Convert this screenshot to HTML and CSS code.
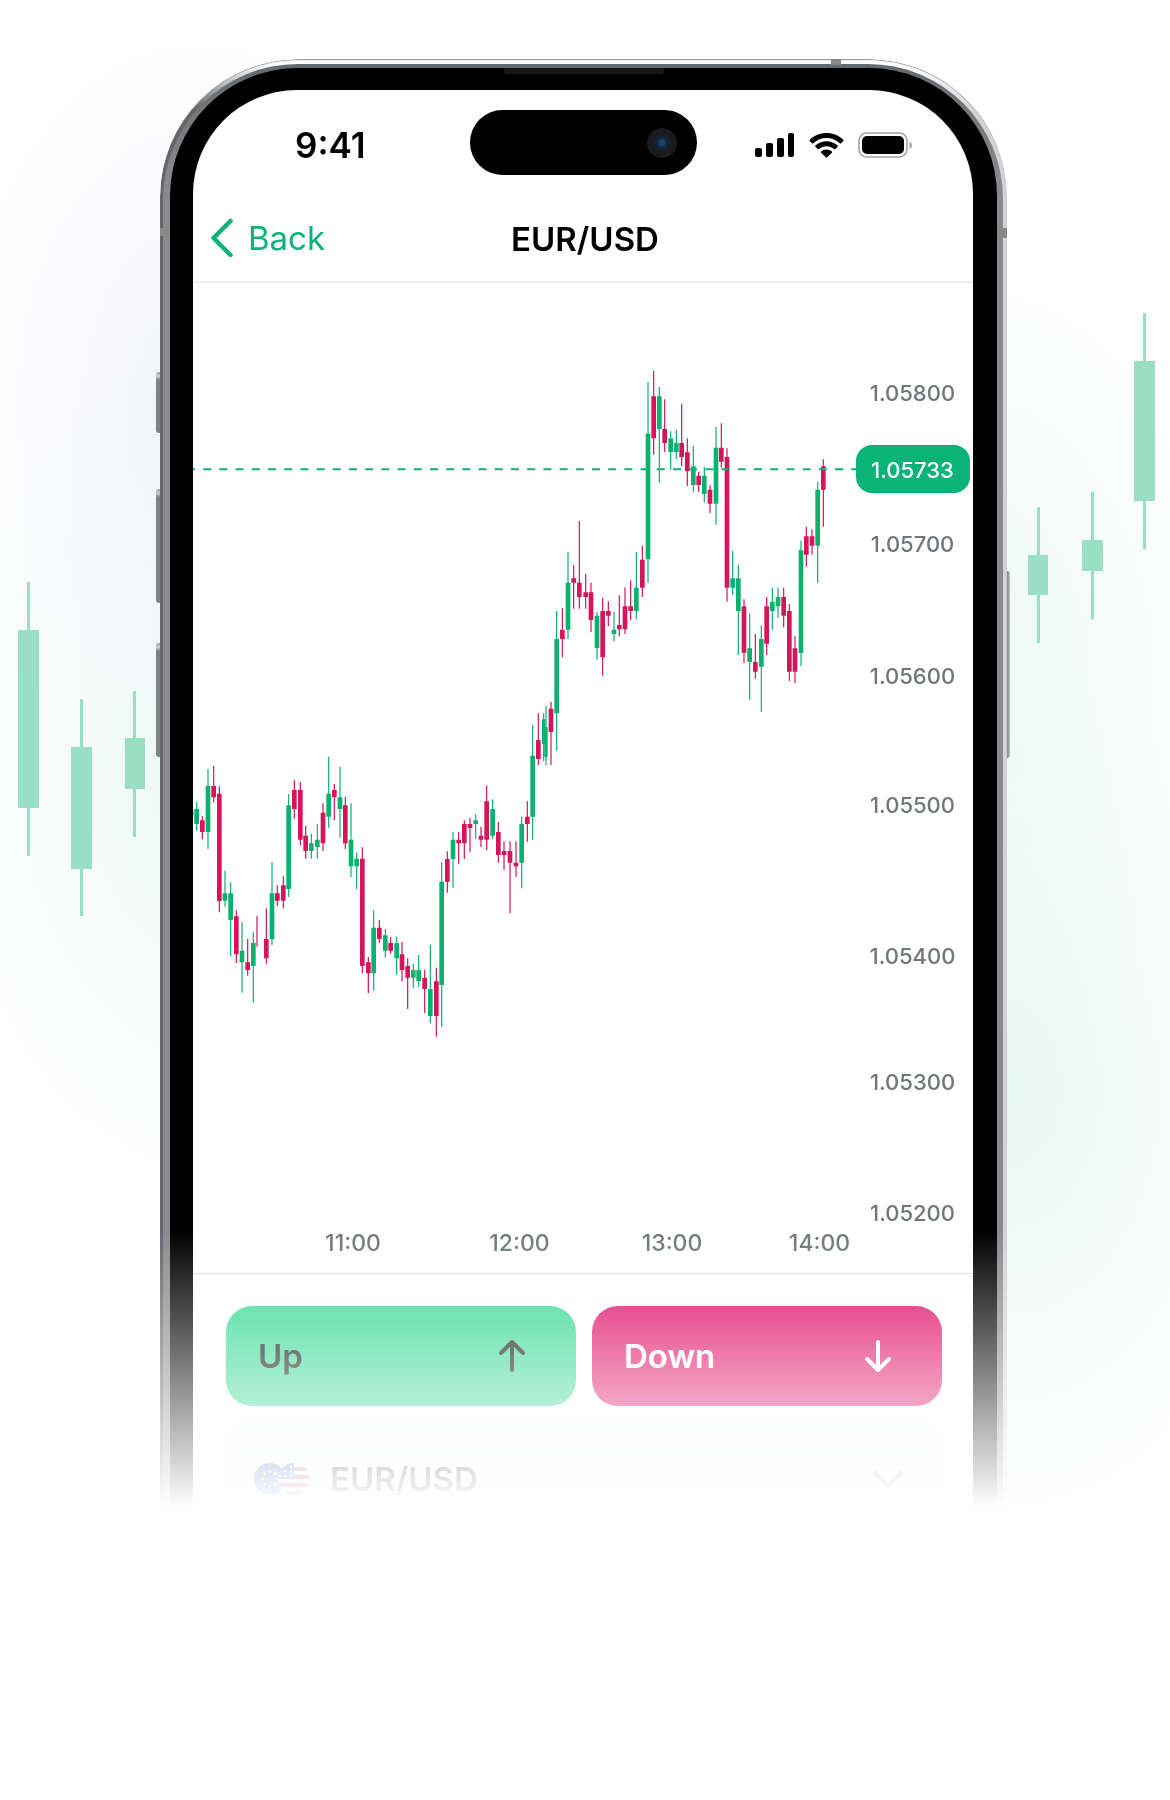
FILE: index.html
```html
<!DOCTYPE html>
<html lang="en">
<head>
<meta charset="utf-8">
<meta name="viewport" content="width=device-width, initial-scale=1">
<title>EUR/USD</title>
<link rel="stylesheet" href="styles.css">
</head>
<body>
<main class="hero">
  <svg class="side-candles" viewBox="0 0 160 1451" aria-hidden="true">
    <path d="M27 523h3v274h-3zM18 571h21v178H18zM80 640h3v217h-3zM71 688h21v122H71zM133 632h3v146h-3zM125 679h20v51h-20z"/>
  </svg>

  <div class="device">
    <span class="key key-mute"></span>
    <span class="key key-up"></span>
    <span class="key key-down"></span>
    <span class="key key-power"></span>
    <div class="frame">
      <span class="antenna antenna-left"></span>
      <span class="antenna antenna-right"></span>
      <span class="antenna antenna-top"></span>
      <div class="rim">
        <div class="bezel">
          <span class="speaker"></span>
          <div class="screen">
            <div class="status">
              <span class="time">9:41</span>
              <div class="island"><span class="camera"></span></div>
              <div class="indicators">
                <svg width="40" height="26" viewBox="0 0 40 26" aria-hidden="true">
                  <rect x="0" y="16" width="7" height="9" rx="2"/><rect x="11" y="11" width="7" height="14" rx="2"/><rect x="22" y="6" width="7" height="19" rx="2"/><rect x="33" y="1" width="6" height="24" rx="2"/>
                </svg>
                <svg width="35" height="26" viewBox="0 0 35 26" aria-hidden="true">
                  <path d="M17.5 1C24 1 30 3.500 34.300 7.700a.9.900 0 0 1 0 1.300l-2.300 2.300a.9.900 0 0 1-1.300 0C27 7.900 22.500 6 17.500 6S8 7.900 4.300 11.300a.9.900 0 0 1-1.300 0L.7 9a.9.900 0 0 1 0-1.300C5 3.500 11 1 17.500 1z"/>
                  <path d="M17.500 9.200c4.300 0 8.200 1.600 11.100 4.300a.9.900 0 0 1 0 1.300l-2.300 2.300a.9.900 0 0 1-1.200 0c-2.100-1.900-4.700-2.900-7.600-2.900s-5.500 1-7.600 2.900a.9.900 0 0 1-1.200 0l-2.300-2.300a.9.900 0 0 1 0-1.300c2.900-2.700 6.800-4.300 11.100-4.300z"/>
                  <path d="M17.500 17.400c2.100 0 4 .8 5.400 2a.9.900 0 0 1 0 1.300l-4.700 4.600a1 1 0 0 1-1.400 0l-4.700-4.600a.9.900 0 0 1 0-1.300c1.400-1.200 3.300-2 5.400-2z"/>
                </svg>
                <svg width="55" height="26" viewBox="0 0 55 26" aria-hidden="true">
                  <rect x="1" y="1" width="48" height="24" rx="7.500" fill="none" stroke="#a3a3a3" stroke-width="1.600"/>
                  <rect x="4" y="4" width="42" height="18" rx="5"/>
                  <path d="M51.500 9.500c3.300 1.500 3.300 6 0 7.500z" fill="#a3a3a3"/>
                </svg>
              </div>
            </div>

            <header class="nav">
              <a class="back" href="#">
                <svg width="24" height="40" viewBox="0 0 24 40" fill="none" stroke="currentColor" stroke-width="4.500" stroke-linecap="round" stroke-linejoin="round" aria-hidden="true"><path d="M20.500 3 3.500 20l17 17"/></svg>
                Back
              </a>
              <h1 class="title">EUR/USD</h1>
            </header>

            <svg class="chart" viewBox="193 283 780 990" role="img" aria-label="EUR/USD price chart">
              <g id="candles"></g>
              <line class="price-line" x1="187" y1="469.300" x2="856" y2="469.300"/>
              <g class="axis prices">
                <text x="912.500" y="401">1.05800</text>
                <text x="912.500" y="552">1.05700</text>
                <text x="912.500" y="684">1.05600</text>
                <text x="912.500" y="813">1.05500</text>
                <text x="912.500" y="964">1.05400</text>
                <text x="912.500" y="1090">1.05300</text>
                <text x="912.500" y="1221">1.05200</text>
              </g>
              <g class="axis times">
                <text x="353" y="1251">11:00</text>
                <text x="519.500" y="1251">12:00</text>
                <text x="672" y="1251">13:00</text>
                <text x="819.500" y="1251">14:00</text>
              </g>
              <rect class="price-tag" x="856" y="445" width="114" height="48" rx="16"/>
              <text class="price-tag-text prices" x="912.500" y="478">1.05733</text>
            </svg>

            <div class="trade">
              <button class="trade-button up" type="button">
                Up
                <svg width="28" height="34" viewBox="0 0 28 34" fill="none" stroke="currentColor" stroke-width="4" stroke-linecap="round" stroke-linejoin="round" aria-hidden="true"><path d="M14 31V3M3 14 14 3l11 11"/></svg>
              </button>
              <button class="trade-button down" type="button">
                Down
                <svg width="28" height="34" viewBox="0 0 28 34" fill="none" stroke="currentColor" stroke-width="4" stroke-linecap="round" stroke-linejoin="round" aria-hidden="true"><path d="M14 3v28M3 20l11 11 11-11"/></svg>
              </button>
              <button class="pair" type="button">
                <svg width="56" height="32" viewBox="0 0 56 32" aria-hidden="true">
                  <defs><clipPath id="round"><circle cx="40" cy="16" r="16"/></clipPath></defs>
                  <circle cx="16" cy="16" r="16" fill="#1454b8"/>
                  <g fill="#ffda44"><circle cx="16" cy="8.500" r="1.400"/><circle cx="21.300" cy="10.700" r="1.400"/><circle cx="23.500" cy="16" r="1.400"/><circle cx="21.300" cy="21.300" r="1.400"/><circle cx="16" cy="23.500" r="1.400"/><circle cx="10.700" cy="21.300" r="1.400"/><circle cx="8.500" cy="16" r="1.400"/><circle cx="10.700" cy="10.700" r="1.400"/></g>
                  <g clip-path="url(#round)">
                    <path fill="#fff" d="M24 0h32v32H24z"/>
                    <path fill="#e0143c" d="M24 4h32v4H24zM24 12h32v4H24zM24 20h32v4H24zM24 28h32v4H24z"/>
                    <path fill="#1454b8" d="M24 0h16v16H24z"/>
                    <g fill="#fff"><circle cx="37" cy="3.500" r="1.300"/><circle cx="31.500" cy="8.500" r="1.300"/><circle cx="37" cy="8.500" r="1.300"/><circle cx="26" cy="13" r="1.300"/><circle cx="31.500" cy="13" r="1.300"/><circle cx="37" cy="13" r="1.300"/></g>
                  </g>
                </svg>
                <span>EUR/USD</span>
                <svg class="chevron" width="32" height="20" viewBox="0 0 32 20" fill="none" stroke="currentColor" stroke-width="4.500" stroke-linecap="round" stroke-linejoin="round" aria-hidden="true"><path d="m3 4 13 13L29 4"/></svg>
              </button>
            </div>
          </div>
        </div>
      </div>
    </div>
  </div>

  <svg class="side-candles" viewBox="0 0 163 1451" aria-hidden="true">
    <path d="M30 448h3v136h-3zM21 496h20v40H21zM84 433h3v127h-3zM75 481h21v31H75zM136 254h3v236h-3zM127 302h21v140h-21z"/>
  </svg>
</main>
<script src="chart.js"></script>
</body>
</html>
```

FILE: styles.css
```css
* {
  box-sizing: border-box;
}

body {
  margin: 0;
  background: #fff;
  color: #000;
  font-family: Inter, "Liberation Sans", sans-serif;
}

.hero {
  display: grid;
  grid-template-columns: 160px minmax(0, 1fr) 163px;
  align-items: start;
  padding: 59px 0 290px;
  background:
    radial-gradient(ellipse 240px 360px at 200px 400px, #f1f2fb, #f1f2fb00),
    radial-gradient(ellipse 280px 420px at 220px 760px, #e9f8f3, #e9f8f300),
    radial-gradient(ellipse 280px 420px at calc(100% - 160px) 1090px, #e7f7f1, #e7f7f100),
    radial-gradient(ellipse 260px 400px at calc(100% - 200px) 680px, #eaf9f4, #eaf9f400);
}

.side-candles {
  width: 100%;
  fill: #98dfc5;
}

/* Device body */
.device {
  position: relative;
  border-radius: 138px 138px 0 0;
  background: #fff;
}

.frame {
  position: relative;
  padding: 5px 4px 0 3px;
  border-radius: 138px 138px 0 0;
  background:
    linear-gradient(to bottom, #fff 5px, #ffffff00 50px),
    linear-gradient(to right, #636569 50%, #d3d4d9 90%);
  box-shadow: inset 0 1px 1px #8f9294;
  mask-image: linear-gradient(to bottom, #000 calc(100% - 280px), transparent calc(100% - 2px));
}

.rim {
  padding: 4px 6px 0 7px;
  border-radius: 135px 135px 0 0;
  background: linear-gradient(to bottom, #66696c, #898a8f 120px);
}

.bezel {
  position: relative;
  padding: 22px 24px 0 23px;
  border-radius: 128px 128px 0 0;
  background: #000;
}

.screen {
  overflow: hidden;
  border-radius: 104px 104px 0 0;
  background: #fff;
}

.speaker {
  position: absolute;
  top: 0;
  left: 50%;
  width: 160px;
  height: 6px;
  margin-left: -80px;
  border-radius: 0 0 3px 3px;
  background: #171717;
}

.key {
  position: absolute;
  left: -4px;
  width: 4px;
  border-radius: 3px 0 0 3px;
  background: linear-gradient(to bottom, #a5a6a5 1px, #d0d1d0 4px, #808285 8px);
}

.key-mute {
  top: 313px;
  height: 61px;
}

.key-up {
  top: 430px;
  height: 114px;
}

.key-down {
  top: 584px;
  height: 114px;
}

.key-power {
  top: 512px;
  right: -3px;
  left: auto;
  width: 3px;
  height: 187px;
  border-radius: 0 3px 3px 0;
  background: linear-gradient(to right, #8e8d93 1px, #c9c9cd);
}

.antenna {
  position: absolute;
  background: #86888a;
}

.antenna-left {
  top: 169px;
  left: 0;
  width: 10px;
  height: 8px;
}

.antenna-right {
  top: 169px;
  right: 0;
  width: 10px;
  height: 10px;
}

.antenna-top {
  top: 0;
  right: 166px;
  width: 10px;
  height: 6px;
}

/* Status bar */
.status {
  display: grid;
  grid-template-columns: 1fr auto 1fr;
  align-items: center;
  padding: 20px 0;
}

.time {
  padding: 4px 0 0 102px;
  font-size: 35px;
  font-weight: 600;
  line-height: 40px;
}

.island {
  display: flex;
  align-items: center;
  justify-content: flex-end;
  width: 227px;
  height: 65px;
  padding-right: 20px;
  border-radius: 33px;
  background: #000;
}

.camera {
  width: 30px;
  height: 30px;
  border-radius: 50%;
  background: radial-gradient(circle, #1b456f 2px, #12263d 5px, #14202e 8px, #1b1b1d 9px);
}

.indicators {
  display: flex;
  gap: 14px;
  justify-content: flex-end;
  padding: 4px 60px 0 0;
}

/* Navigation bar */
.nav {
  display: grid;
  grid-template-columns: 1fr auto 1fr;
  align-items: center;
  height: 88px;
  padding-left: 4px;
  border-bottom: 2px solid #eeeeef;
  font-size: 33px;
  line-height: 40px;
}

.back {
  display: flex;
  gap: 14px;
  align-items: center;
  padding-left: 13px;
  color: #0bb378;
  text-decoration: none;
}

.title {
  margin: 0;
  padding-top: 2px;
  font-size: 33px;
  font-weight: 600;
}

/* Chart */
.chart {
  display: block;
  width: 100%;
  font-weight: 500;
  text-anchor: middle;
}

.axis {
  fill: #6f7779;
}

.prices {
  font-size: 22px;
}

.times {
  font-size: 23px;
}

.rise {
  fill: #0bb26e;
}

.fall {
  fill: #d6145c;
}

.price-line {
  stroke: #0bb378;
  stroke-width: 2;
  stroke-dasharray: 8 8.2;
}

.price-tag {
  fill: #0bb378;
}

.price-tag-text {
  fill: #fff;
}

/* Trade controls */
.trade {
  display: grid;
  grid-template-columns: 1fr 1fr;
  gap: 16px;
  padding: 32px 31px 0 33px;
  border-top: 1px solid #d8d9d9;
}

.trade-button,
.pair {
  display: flex;
  align-items: center;
  border: 0;
  font: 600 33px/40px Inter, "Liberation Sans", sans-serif;
}

.trade-button {
  justify-content: space-between;
  height: 100px;
  padding: 0 50px 0 32px;
  border-radius: 26px;
}

.up {
  background: #35d892;
  color: #0a0f0e;
}

.down {
  background: #df0e66;
  color: #fff;
}

.pair {
  grid-column: 1 / -1;
  gap: 20px;
  height: 88px;
  padding: 26px 38px 0 28px;
  border-radius: 26px 26px 0 0;
  background: #f6f8f8;
  color: #0f1a17;
}

.chevron {
  margin-left: auto;
  color: #9a9f9e;
}
```

FILE: chart.js
```js
// Each run of candles has an origin in chart space; values are thirds of a unit.
// Candle: [centre x, high, body top, body bottom, low, direction]
const U = "rise", D = "fall";
const runs = [
  { origin: [190, 740], candles: [
    [3,200,208,230,240,D],[20,185,207,252,272,U],[37,229,241,276,298,D],[54,87,138,276,327,U],
    [71,78,138,172,187,D],[88,139,161,483,517,D],[105,392,460,482,500,U],[122,427,460,540,649,U],
    [139,511,529,643,669,D],[156,546,632,667,758,U],[173,597,667,690,707,D],[190,576,609,678,788,U],
    [201,528,620,620,620,D],[229,505,597,655,671,D],[246,367,460,598,615,U],[262,436,460,482,499,D],
    [280,408,436,482,505,D],[296,162,196,447,471,U],[313,121,150,207,236,D],[331,126,150,299,316,D],
    [347,258,287,333,356,D],[364,281,310,333,356,U],[382,253,299,321,356,U],[399,190,218,310,333,D],
    [416,50,161,230,263,U],[433,132,150,172,241,D],[450,80,172,207,293,U],[466,170,196,310,327,D],
    [483,190,299,379,412,U],[500,337,356,379,447,U],[517,322,356,678,700,D],[535,651,667,700,760,D],
    [551,511,563,700,752,U],[568,540,563,597,609,D],[586,567,586,632,652,U],[602,591,609,632,641,D],
    [620,590,609,655,704,U],[636,606,643,690,724,D],[653,655,678,713,807,D],[670,672,690,713,744,U],
    [686,645,690,724,741,U],[704,689,713,747,819,D],[721,614,747,828,850,U],[739,683,724,828,890,D],
    [755,367,425,735,861,U]
  ]},
  { origin: [420, 500], candles: [
    [82,1054,1077,1145,1178,D],[99,996,1019,1077,1163,U],[116,995,1019,1030,1093,D],[133,961,972,1030,1077,D],
    [150,954,972,984,1057,D],[167,943,961,972,1017,U],[183,980,1007,1019,1041,D],[200,858,904,1019,1051,D],
    [218,898,927,1007,1017,U],[235,966,996,1065,1088,D],[252,1024,1053,1065,1110,D],[270,1024,1053,1088,1240,D],
    [288,1024,1088,1099,1131,D],[305,950,972,1088,1165,U],[322,904,950,972,1025,D],[338,674,767,950,1019,U],
    [355,640,720,777,795,D],[371,640,658,732,783,U,10],[378,618,682,771,795,U,10],[393,605,626,696,795,D],
    [410,333,417,640,752,U],[427,325,389,417,472,D],[444,155,248,389,417,U],[461,195,235,248,326,D],
    [478,63,248,291,326,D],[497,221,277,291,326,D],[513,248,277,360,396,D],[531,336,347,444,479,U],
    [548,293,333,472,527,D],[565,304,333,347,379,D],[582,336,389,402,424,U],[598,286,375,388,409,D],
    [615,262,319,388,402,D],[632,241,319,333,360,D],[649,156,263,333,358,U],[667,137,179,263,290,D]
  ]},
  { origin: [620, 350], candles: [
    [84,97,251,628,698,U],[101,62,139,265,314,D],[118,111,139,237,398,U],[134,148,237,279,306,D],
    [152,244,265,306,359,U],[169,239,279,306,327,U],[185,162,279,321,349,D],[202,265,307,363,408,D],
    [220,288,349,405,426,U],[236,365,377,405,426,D],[253,351,377,432,457,U],[270,405,419,461,489,D],
    [288,230,293,461,524,U],[304,220,293,335,353,D],[321,295,321,713,755,D],[338,602,685,713,735,U],
    [355,644,685,783,915,U],[372,748,769,908,939,D],[389,790,895,936,1049,U],[406,852,936,965,986,D],
    [424,826,867,950,1085,U],[440,741,769,881,915,D],[457,713,755,783,839,U],[474,713,741,769,803,U],
    [491,713,741,797,832,D],[508,762,783,965,993,D],[525,858,895,965,999,D],[543,572,601,909,949,U],
    [559,530,559,614,650,D],[576,538,559,587,614,D],[593,395,419,587,698,U],[610,328,349,419,530,D]
  ]}
];

const layer = document.getElementById("candles");
for (const { origin: [ox, oy], candles } of runs) {
  for (const [x, high, top, bottom, low, direction, width = 14] of candles) {
    const px = v => ox + v / 3;
    const py = v => oy + v / 3;
    const path = document.createElementNS("http://www.w3.org/2000/svg", "path");
    path.setAttribute("class", direction);
    path.setAttribute("d",
      `M${px(x - 1.8)} ${py(high)}H${px(x + 1.8)}V${py(low)}H${px(x - 1.8)}z` +
      `M${px(x - width / 2)} ${py(top)}H${px(x + width / 2)}V${py(bottom)}H${px(x - width / 2)}z`);
    layer.append(path);
  }
}
```
